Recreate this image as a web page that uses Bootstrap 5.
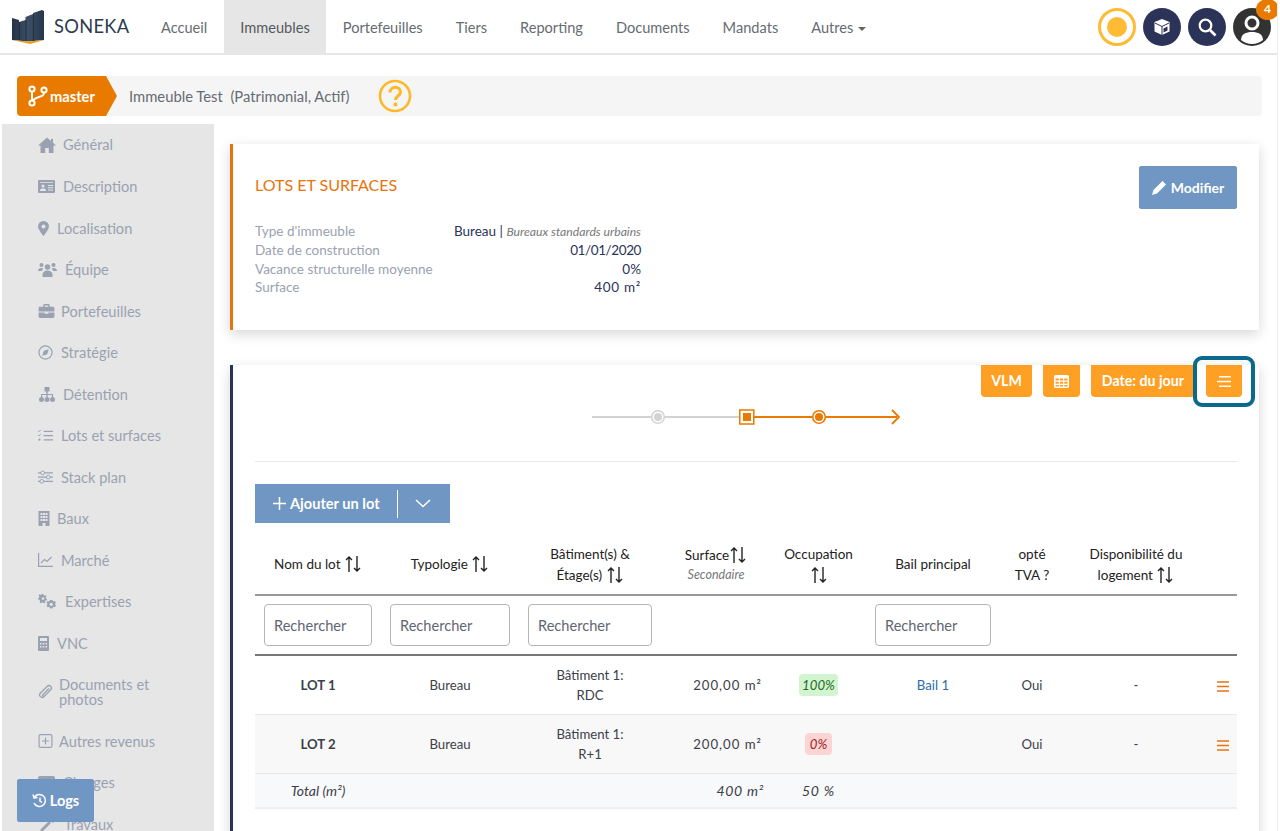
<!DOCTYPE html>
<html lang="fr"><head><meta charset="utf-8"><title>Soneka</title>
<link href="https://cdn.jsdelivr.net/npm/bootstrap@5.3.0/dist/css/bootstrap.min.css" rel="stylesheet">
<style>
html,body{height:831px;overflow:hidden;background:#fff}
body{font-family:"Lato","Open Sans",sans-serif;font-size:14px;color:#3c4048}
.app-frame{width:1278px;height:831px;border-right:1px solid #eee;overflow:hidden}
.top-bar{height:55px;padding:0;border-bottom:2px solid #e7e7e7;flex-wrap:nowrap;justify-content:flex-start;align-items:stretch}
.brand-box{display:flex;align-items:center;width:144.500px;flex:none;padding-left:12px;margin:0;font-size:18.300px;color:#2c3a4d;text-decoration:none;gap:9px;letter-spacing:.3px}
.top-bar.navbar-expand .navbar-nav .nav-link{padding:0 16.500px;height:53px;line-height:55px;color:#666c72;font-size:14.600px}
.top-bar.navbar-expand .navbar-nav .nav-link.active{background:#e6e6e6;color:#555a60}
.caret-mark{display:inline-block;border:4px solid transparent;border-top-color:#666;border-bottom:0;margin-left:5px;vertical-align:2px}
.round-tools{margin-left:auto;display:flex;align-items:center;gap:7px;padding-right:6px}
.round-tool{width:38px;height:38px;border-radius:50%;background:#2b3358;display:flex;align-items:center;justify-content:center;position:relative}
.round-sun{background:#fff;border:3px solid #ffbb33}
.round-sun i{display:block;width:20px;height:20px;border-radius:50%;background:#ffbb33}
.round-user{background:#333}
.count-pill{position:absolute;top:-9px;right:-8px;width:23px;height:21px;border-radius:50%;background:#e87a00;color:#fff;font-size:12px;font-weight:700;text-align:center;line-height:19px}
.crumb-bar{height:40px;margin:21px 15px 0 17px;background:#f5f5f5;display:flex;align-items:center;border-radius:4px;color:#666c72;font-size:14.800px}
.master-tag{width:100px;height:40px;background:#e87a00;color:#fff;font-weight:700;font-size:14.700px;display:flex;align-items:center;gap:2px;padding-left:11px;clip-path:polygon(0 0,89px 0,100px 50%,89px 100%,0 100%);border-radius:4px 0 0 4px;margin-right:12px}
.crumb-help{margin-left:28px}
.page-body{display:flex;margin-top:8px;height:710px}
.side-menu{width:212px;margin-left:2px;background:#e6e6e6;flex:none;height:710px;overflow:hidden;fill:#9aa2b1}
.side-link{display:flex;align-items:center;padding:12.750px 10px 13.750px 36px;line-height:15px;color:#9aa2b1;font-size:14.600px;text-decoration:none}
.side-link svg{flex:none}
.g8{gap:8px}.g7{gap:7px}.g6{gap:6px}
.content-area{flex:1;min-width:0;padding:20px 18px 0 16px}
.panel-orange,.panel-navy{background:#fff;box-shadow:0 4px 12px rgba(0,0,0,.16);padding:0 22px}
.panel-orange{height:186px;border-left:3px solid #e8730c;padding-top:22px;display:flex;justify-content:space-between;align-items:flex-start;margin-bottom:35px}
.panel-navy{border-left:3px solid #2b3358;height:600px}
.panel-title{color:#e8730c;font-size:16px;font-weight:400;margin:9px 0 27px;line-height:20px}
.facts{display:grid;grid-template-columns:190px 196px;line-height:18.400px;font-size:13.500px}
.facts dt{font-weight:400;color:#9aa2b1}
.facts dd{margin:0;text-align:right;color:#2b3358;white-space:nowrap}
.facts em{color:#777;font-size:12.200px}
.facts .date-val{letter-spacing:-.4px}
.facts .area-val{letter-spacing:.7px}
.btn-slate{--bs-btn-bg:#7096c3;--bs-btn-border-color:#7096c3;--bs-btn-color:#fff;--bs-btn-hover-bg:#7096c3;--bs-btn-hover-color:#fff;--bs-btn-hover-border-color:#7096c3;font-weight:700;font-size:14px;border-radius:2px}
.edit-btn{width:98px;height:43px;padding:0;display:flex;align-items:center;justify-content:center;gap:4px}
.tool-row{display:flex;justify-content:flex-end;gap:11px;margin-right:-5px}
.amber-btn{background:#ff9f24;color:#fff;font-weight:700;font-size:14.200px;height:32px;border:0;border-radius:0 0 4px 4px;padding:0 11px;display:flex;align-items:center}
.amber-slim{padding:0 10px}
.tool-wrap{position:relative}
.focus-frame{position:absolute;left:-13px;right:-13px;top:-9px;bottom:-10px;border:4px solid #0a6a8c;border-radius:9px}
.flow-line{display:block;margin:5px auto 0}
.flow-rule{border:0;border-top:1px solid #e8e8e8;opacity:1;margin:29px 0 22px}
.add-group{display:inline-flex;height:39px;background:#7096c3;color:#fff;font-weight:700;font-size:14.600px;align-items:center;width:195px;padding-left:18px}
.add-sep{width:1px;height:28px;background:#fff;margin:0 17px}
.lots-table{table-layout:fixed;width:982px;margin:12px 0 0;font-size:13.200px;--bs-table-bg:transparent;color:#3c4048}
.lots-table th,.lots-table td{padding:0 9px;text-align:center;vertical-align:middle;border:0;color:inherit}
.lots-table th{font-weight:400;color:#222;line-height:21px;font-size:13.500px}
.lots-table .head-row th{height:60px;border-bottom:2px solid #999}
.lots-table .find-row td{height:60px;border-bottom:2px solid #777}
.find-input{height:42px;border:1px solid #b5b5b5;border-radius:4px;padding:0 9px;font-size:14.600px;width:100%;color:#5f6672}
.find-input::placeholder{color:#5f6672;opacity:1}
.lots-table .data-row td{height:59px;line-height:20px;border-bottom:1px solid #e9e9e9}
.lots-table .tint td{background:#f8f8f8}
.lots-table .sum-row td{height:35px;background:#f8f9fb;font-style:italic;font-size:14px;border-bottom:2px solid #eceef0;border-top:1px solid #eceef0}
.lot-name{font-weight:700;color:#333}
.lots-table .num-right{text-align:right;letter-spacing:1px}
.lots-table .sum-row .num-right{padding-right:7px;letter-spacing:.7px}
.lots-table .sum-pct{letter-spacing:.8px}
.pct-good,.pct-bad{display:inline-block;padding:2px 3px;border-radius:4px;font-style:italic;line-height:18px}
.pct-good{background:#d2f4d0;color:#1e6b22}.pct-bad{background:#fdd4d4;color:#962525;padding:2px 5px}
.bail-link{color:#2a6db0;text-decoration:none}
.sub-note{display:block;font-size:12.500px;font-style:italic;color:#777;line-height:18px}
.c1{width:126px}.c2{width:138px}.c3{width:142px}.c4{width:110px}.c5{width:95px}.c6{width:134px}.c7{width:64px}.c8{width:144px}.c9{width:29px}
.logs-btn{position:fixed;left:17px;top:779px;width:77px;height:43px;padding:0;display:flex;align-items:center;justify-content:center;gap:3px;border-radius:2px;font-size:14.500px}
.sort-mark{vertical-align:-4px}
</style></head><body>
<svg width="0" height="0" class="d-none"><defs>
<symbol id="sorter" viewBox="0 0 18 18"><path d="M5 17V2M2 5l3-3 3 3M13 1v15M10 13l3 3 3-3" fill="none" stroke="#222" stroke-width="1.400"/></symbol>
</defs></svg>
<div class="app-frame">
<nav class="navbar navbar-expand top-bar">
  <a class="brand-box" href="#">
    <svg width="33" height="34" viewBox="0 0 33 34"><defs><linearGradient id="tw" x1="0" y1="0" x2="1" y2="0"><stop offset="0" stop-color="#253345"/><stop offset=".5" stop-color="#3b5068"/><stop offset="1" stop-color="#26364a"/></linearGradient></defs><path d="M0 8l7 2v2l6.500-2v-3L21 4v-1l9-3 2 1v29l-16 1.500L0 30z" fill="url(#tw)"/><path d="M7.300 12v18M14 10v21M21.500 5v26" stroke="#1c2836" stroke-width=".8" fill="none"/><path d="M0 30l16 1.500L32 30l-14 4z" fill="#f39c12"/></svg>
    <span>SONEKA</span>
  </a>
  <ul class="navbar-nav flex-row">
    <li class="nav-item"><a class="nav-link" href="#">Accueil</a></li>
    <li class="nav-item"><a class="nav-link active" href="#">Immeubles</a></li>
    <li class="nav-item"><a class="nav-link" href="#">Portefeuilles</a></li>
    <li class="nav-item"><a class="nav-link" href="#">Tiers</a></li>
    <li class="nav-item"><a class="nav-link" href="#">Reporting</a></li>
    <li class="nav-item"><a class="nav-link" href="#">Documents</a></li>
    <li class="nav-item"><a class="nav-link" href="#">Mandats</a></li>
    <li class="nav-item"><a class="nav-link" href="#">Autres<span class="caret-mark"></span></a></li>
  </ul>
  <div class="round-tools">
    <div class="round-tool round-sun"><i></i></div>
    <div class="round-tool"><svg width="18" height="18" viewBox="0 0 18 18"><path d="M9 1l7.500 3v9.500L9 17l-7.500-3.500V4z" fill="#fff"/><path d="M9 8.500L16 5M9 8.500L2 5M9 8.500V17" stroke="#2b3358" stroke-width="1" fill="none"/><path d="M10.500 10.500l4-2v4l-4 2z" fill="#2b3358"/></svg></div>
    <div class="round-tool"><svg width="20" height="20" viewBox="0 0 20 20"><circle cx="8.500" cy="8.500" r="5.800" fill="none" stroke="#fff" stroke-width="2.200"/><path d="M13 13l5.500 5.500" stroke="#fff" stroke-width="2.600"/></svg></div>
    <div class="round-tool round-user"><svg width="38" height="38" viewBox="0 0 38 38"><circle cx="19" cy="15" r="6" fill="none" stroke="#fff" stroke-width="3"/><path d="M8 32c0-6 5-8 11-8s11 2 11 8a17 17 0 0 1-22 0z" fill="#fff"/></svg><span class="count-pill">4</span></div>
  </div>
</nav>
<div class="crumb-bar">
  <div class="master-tag"><svg width="20" height="22" viewBox="0 0 20 22" fill="none" stroke="#fff" stroke-width="2"><circle cx="4" cy="4" r="2.600"/><circle cx="4" cy="18" r="2.600"/><circle cx="16" cy="5" r="2.600"/><path d="M4 7v8M16 8c0 5-9 3-11 8"/></svg><span>master</span></div>
  <span>Immeuble Test &nbsp;(Patrimonial, Actif)</span>
  <svg class="crumb-help" width="34" height="34" viewBox="0 0 34 34"><circle cx="17" cy="17" r="15" fill="none" stroke="#fdb827" stroke-width="2.600"/><path d="M12 13.500c0-7 10.500-7 10.500-.5 0 4-5 3.500-5 8" fill="none" stroke="#fdb827" stroke-width="3"/><circle cx="17.500" cy="25.500" r="1.900" fill="#fdb827"/></svg>
</div>
<div class="page-body">
<aside class="side-menu nav flex-column flex-nowrap">
  <a class="side-link g7" href="#"><svg width="18" height="16" viewBox="0 0 18 16"><path d="M9 .5L0 8.500h2.500V16h4.700v-5h3.600v5h4.700V8.500H18l-3-2.700V2h-2v2z"/></svg>Général</a>
  <a class="side-link g8" href="#"><svg width="17" height="13" viewBox="0 0 17 13"><path d="M1 0h15a1 1 0 0 1 1 1v11a1 1 0 0 1-1 1H1a1 1 0 0 1-1-1V1a1 1 0 0 1 1-1zm1 2v.8h13V2zm3 2.500a1.500 1.500 0 1 0 0 3 1.500 1.500 0 0 0 0-3zM2 11h6c0-2-1-2.500-3-2.500S2 9 2 11zm8-6v1h5V5zm0 2.200v1h5v-1zm0 2.200v1h5v-1z" fill-rule="evenodd"/></svg>Description</a>
  <a class="side-link g8" href="#"><svg width="11" height="15" viewBox="0 0 11 15"><path d="M5.500 0A5.500 5.500 0 0 0 0 5.500C0 8.500 5.500 15 5.500 15S11 8.500 11 5.500A5.500 5.500 0 0 0 5.500 0zm0 7.500a2 2 0 1 1 0-4 2 2 0 0 1 0 4z" fill-rule="evenodd"/></svg>Localisation</a>
  <a class="side-link g8" href="#"><svg width="19" height="15" viewBox="0 0 19 15"><circle cx="3.500" cy="3" r="2"/><circle cx="15.500" cy="3" r="2"/><circle cx="9.500" cy="5" r="2.700"/><path d="M0 9c0-2 1.500-3 3.500-3 1 0 1.500.3 2 .7C4.500 7.500 4 8 3.800 9zM19 9c0-2-1.500-3-3.500-3-1 0-1.500.3-2 .7 1 .8 1.500 1.300 1.700 2.300zM4.500 13c0-3 2-4.500 5-4.500s5 1.500 5 4.500v2h-10z"/></svg>Équipe</a>
  <a class="side-link g6" href="#"><svg width="17" height="14" viewBox="0 0 17 15"><path d="M5 3V1.500A1.500 1.500 0 0 1 6.500 0h4A1.500 1.500 0 0 1 12 1.500V3h3.500A1.500 1.500 0 0 1 17 4.500V8H0V4.500A1.500 1.500 0 0 1 1.500 3zm1.500 0h4V1.500h-4zM0 9h6.500v1.500h4V9H17v4.500a1.500 1.500 0 0 1-1.500 1.500h-14A1.500 1.500 0 0 1 0 13.500z" fill-rule="evenodd"/></svg>Portefeuilles</a>
  <a class="side-link g8" href="#"><svg width="15" height="15" viewBox="0 0 16 16"><circle cx="8" cy="8" r="7" fill="none" stroke="#9aa2b1" stroke-width="1.300"/><path d="M11.500 4.500l-1.700 5.300-5.300 1.700 1.700-5.300z"/></svg>Stratégie</a>
  <a class="side-link g7" href="#"><svg width="18" height="15" viewBox="0 0 18 15"><path d="M6.500 0h5v4.500H9.700V7H15v3h-1.200V8H9.700v2H8.300V8H4.200v2H3V7h5.300V4.500H6.500z"/><circle cx="3.500" cy="12.500" r="2.500"/><circle cx="9" cy="12.500" r="2.500"/><circle cx="14.500" cy="12.500" r="2.500"/></svg>Détention</a>
  <a class="side-link g8" href="#"><svg width="15" height="13" viewBox="0 0 16 13"><path d="M6 1.500h10v1.200H6zM6 6h10v1.200H6zM6 10.500h10v1.200H6z"/><path d="M0 1.500l1 1L3 .5M0 6l1 1 2-2" fill="none" stroke="#9aa2b1" stroke-width="1"/><circle cx="1.500" cy="11" r="1.200"/></svg>Lots et surfaces</a>
  <a class="side-link g8" href="#"><svg width="15" height="14" viewBox="0 0 16 14"><path d="M0 2h16v1.200H0zM0 6.500h16v1.200H0zM0 11h16v1.200H0z"/><circle cx="5" cy="2.600" r="2" fill="#e6e6e6" stroke="#9aa2b1"/><circle cx="11" cy="7.100" r="2" fill="#e6e6e6" stroke="#9aa2b1"/><circle cx="4" cy="11.600" r="2" fill="#e6e6e6" stroke="#9aa2b1"/></svg>Stack plan</a>
  <a class="side-link g7" href="#"><svg width="12" height="15" viewBox="0 0 11 15"><path d="M0 0h11v15H7v-3H4v3H0zm2 2v2h2V2zm2.500 0v2h2V2zM7 2v2h2V2zM2 5v2h2V5zm2.500 0v2h2V5zM7 5v2h2V5zM2 8v2h2V8zm2.500 0v2h2V8zM7 8v2h2V8z" fill-rule="evenodd"/></svg>Baux</a>
  <a class="side-link g8" href="#"><svg width="15" height="14" viewBox="0 0 15 14" fill="none" stroke="#9aa2b1" stroke-width="1.200"><path d="M.6 0v13.400H15M3 10l3.500-3.500L9 8.500 13.500 4"/></svg>Marché</a>
  <a class="side-link g8" href="#"><svg width="19" height="15" viewBox="0 0 19 15"><path d="M6 1h2l.3 1.300 1.200.6 1.100-.5 1 1.400-.8 1 .2 1.300 1.200.5-.3 1.700-1.300.1-.7 1.100.5 1.200-1.500.8-.9-1H6.500l-.9 1-1.500-.8.500-1.200L3.900 7.500l-1.300-.1-.3-1.700 1.200-.5.200-1.300-.8-1 1-1.400 1.100.5L6.200 1.900z" transform="translate(-2 -1) scale(.9)"/><circle cx="5" cy="4.500" r="1.300" fill="#e6e6e6"/><path d="M12 6h2.500l.3 1.100 1 .5 1-.5 1.200 1.600-.8.900v1.200l.8.900-1.200 1.600-1-.5-1 .5-.3 1.100H12l-.3-1.100-1-.5-1 .5-1.200-1.600.8-.9V9.600l-.8-.9 1.200-1.600 1 .5 1-.5z"/><circle cx="13.200" cy="10.300" r="1.600" fill="#e6e6e6"/></svg>Expertises</a>
  <a class="side-link g8" href="#"><svg width="11" height="15" viewBox="0 0 11 15"><path d="M1 0h9a1 1 0 0 1 1 1v13a1 1 0 0 1-1 1H1a1 1 0 0 1-1-1V1a1 1 0 0 1 1-1zm1 2v3h7V2zm0 5v1.500h1.500V7zm2.700 0v1.500h1.600V7zm2.800 0v1.500H9V7zM2 10v1.500h1.500V10zm2.700 0v1.500h1.600V10zm2.800 0v1.500H9V10z" fill-rule="evenodd"/></svg>VNC</a>
  <a class="side-link g6" href="#"><svg width="15" height="16" viewBox="0 0 15 16" fill="none" stroke="#9aa2b1" stroke-width="1.300"><path d="M13.500 5L6 12.500c-2.500 2.500-6-1-3.500-3.500l6.500-6.500c3-2.500 6 1 3.500 3.500L6.500 12c-1 1-2.500-.5-1.500-1.500L11 4.500"/></svg><span>Documents et<br>photos</span></a>
  <a class="side-link g6" href="#"><svg width="15" height="14" viewBox="0 0 14 14" fill="none" stroke="#9aa2b1" stroke-width="1.200"><rect x=".6" y=".6" width="12.800" height="12.800" rx="1.500"/><path d="M7 3.500v7M3.500 7h7"/></svg>Autres revenus</a>
  <a class="side-link g8" href="#"><svg width="17" height="14" viewBox="0 0 17 14"><rect width="17" height="14" rx="2"/></svg>Charges</a>
  <a class="side-link g8" href="#"><svg width="18" height="15" viewBox="0 0 18 15"><path d="M2 13L11 4l2 2-9 9zM10 2l4-1 3 3-2 2z"/></svg>Travaux</a>
</aside>
<main class="content-area">
  <section class="panel-orange">
    <div>
      <h2 class="panel-title">LOTS ET SURFACES</h2>
      <dl class="facts m-0">
        <dt>Type d'immeuble</dt><dd>Bureau | <em>Bureaux standards urbains</em></dd>
        <dt>Date de construction</dt><dd class="date-val">01/01/2020</dd>
        <dt>Vacance structurelle moyenne</dt><dd>0%</dd>
        <dt>Surface</dt><dd class="area-val">400 m²</dd>
      </dl>
    </div>
    <button class="btn btn-slate edit-btn" type="button"><svg width="15" height="15" viewBox="0 0 15 15"><path d="M10.500 1L14 4.500l-9 9L0 15l1.500-5z" fill="#fff"/></svg>Modifier</button>
  </section>
  <section class="panel-navy">
    <div class="tool-row">
      <button class="amber-btn amber-slim" type="button">VLM</button>
      <button class="amber-btn" type="button"><svg width="15" height="13" viewBox="0 0 15 13"><path d="M1.500 0h12A1.500 1.500 0 0 1 15 1.500v10a1.500 1.500 0 0 1-1.500 1.500h-12A1.500 1.500 0 0 1 0 11.500v-10A1.500 1.500 0 0 1 1.500 0zM1.500 3.500v2h3.300v-2zm4.400 0v2h3.200v-2zm4.300 0v2h3.300v-2zM1.500 6.800v2h3.300v-2zm4.400 0v2h3.200v-2zm4.300 0v2h3.300v-2zM1.500 10v1.500h3.300V10zm4.400 0v1.500h3.200V10zm4.300 0v1.500h3.300V10z" fill="#fff" fill-rule="evenodd"/></svg></button>
      <button class="amber-btn" type="button">Date: du jour</button>
      <div class="tool-wrap"><button class="amber-btn" type="button"><svg width="14" height="11" viewBox="0 0 14 11" stroke="#fff" stroke-width="1.500"><path d="M2 .8h12M0 5.500h14M2 10.200h12"/></svg></button><span class="focus-frame"></span></div>
    </div>
    <svg class="flow-line" width="308" height="30" viewBox="0 0 308 30" fill="none">
      <path d="M0 15h147" stroke="#d3d3d3" stroke-width="2"/><path d="M147 15h158" stroke="#e87a00" stroke-width="2"/><path d="M300 8l7 7-7 7" stroke="#e87a00" stroke-width="1.800"/>
      <circle cx="66" cy="15" r="6.300" fill="#fff" stroke="#d3d3d3" stroke-width="1.600"/><circle cx="66" cy="15" r="4" fill="#d3d3d3"/>
      <rect x="147.800" y="8" width="14" height="14" fill="#fff" stroke="#e87a00" stroke-width="1.500"/><rect x="151" y="11" width="8" height="8" fill="#e87a00"/>
      <circle cx="227" cy="15" r="6.300" fill="#fff" stroke="#e87a00" stroke-width="1.600"/><circle cx="227" cy="15" r="4" fill="#e87a00"/>
    </svg>
    <hr class="flow-rule">
    <div class="add-group"><svg width="13" height="13" viewBox="0 0 13 13" stroke="#fff" stroke-width="1.500" class="me-1"><path d="M6.500 0v13M0 6.500h13"/></svg><span>Ajouter un lot</span><span class="add-sep"></span><svg width="16" height="9" viewBox="0 0 16 9" fill="none" stroke="#fff" stroke-width="1.500"><path d="M1 1l7 6.500L15 1"/></svg></div>
    <table class="table lots-table">
      <colgroup><col class="c1"><col class="c2"><col class="c3"><col class="c4"><col class="c5"><col class="c6"><col class="c7"><col class="c8"><col class="c9"></colgroup>
      <thead>
        <tr class="head-row">
          <th>Nom du lot <svg class="sort-mark" width="18" height="18"><use href="#sorter"/></svg></th>
          <th>Typologie <svg class="sort-mark" width="18" height="18"><use href="#sorter"/></svg></th>
          <th>Bâtiment(s) &amp;<br>Étage(s) <svg class="sort-mark" width="18" height="18"><use href="#sorter"/></svg></th>
          <th>Surface<svg class="sort-mark" width="18" height="18"><use href="#sorter"/></svg><span class="sub-note">Secondaire</span></th>
          <th>Occupation<br><svg class="sort-mark" width="18" height="18"><use href="#sorter"/></svg></th>
          <th>Bail principal</th>
          <th>opté<br>TVA ?</th>
          <th>Disponibilité du<br>logement <svg class="sort-mark" width="18" height="18"><use href="#sorter"/></svg></th>
          <th></th>
        </tr>
      </thead>
      <tbody>
        <tr class="find-row">
          <td><input class="find-input" placeholder="Rechercher"></td>
          <td><input class="find-input" placeholder="Rechercher"></td>
          <td><input class="find-input" placeholder="Rechercher"></td>
          <td></td><td></td>
          <td><input class="find-input" placeholder="Rechercher"></td>
          <td></td><td></td><td></td>
        </tr>
        <tr class="data-row">
          <td class="lot-name">LOT 1</td><td>Bureau</td><td>Bâtiment 1:<br>RDC</td><td class="num-right">200,00 m²</td>
          <td><span class="pct-good">100%</span></td><td><a class="bail-link" href="#">Bail 1</a></td><td>Oui</td><td>-</td>
          <td class="p-0"><svg width="12" height="11" viewBox="0 0 12 11" stroke="#e8730c" stroke-width="1.300"><path d="M0 1h12M0 5.500h12M0 10h12"/></svg></td>
        </tr>
        <tr class="data-row tint">
          <td class="lot-name">LOT 2</td><td>Bureau</td><td>Bâtiment 1:<br>R+1</td><td class="num-right">200,00 m²</td>
          <td><span class="pct-bad">0%</span></td><td></td><td>Oui</td><td>-</td>
          <td class="p-0"><svg width="12" height="11" viewBox="0 0 12 11" stroke="#e8730c" stroke-width="1.300"><path d="M0 1h12M0 5.500h12M0 10h12"/></svg></td>
        </tr>
        <tr class="sum-row">
          <td>Total (m²)</td><td></td><td></td><td class="num-right">400 m²</td><td class="sum-pct">50 %</td><td></td><td></td><td></td><td></td>
        </tr>
      </tbody>
    </table>
  </section>
</main>
</div>
</div>
<button class="btn btn-slate logs-btn" type="button"><svg width="15" height="15" viewBox="0 0 15 15" fill="none" stroke="#fff" stroke-width="1.500"><path d="M2.500 4A6 6 0 1 1 2 10M1 1.500l1 3.500 3.500-.5M8 4.500V8l2 1.500"/></svg>Logs</button>
<script src="https://cdn.jsdelivr.net/npm/bootstrap@5.3.0/dist/js/bootstrap.bundle.min.js"></script>
</body></html>
